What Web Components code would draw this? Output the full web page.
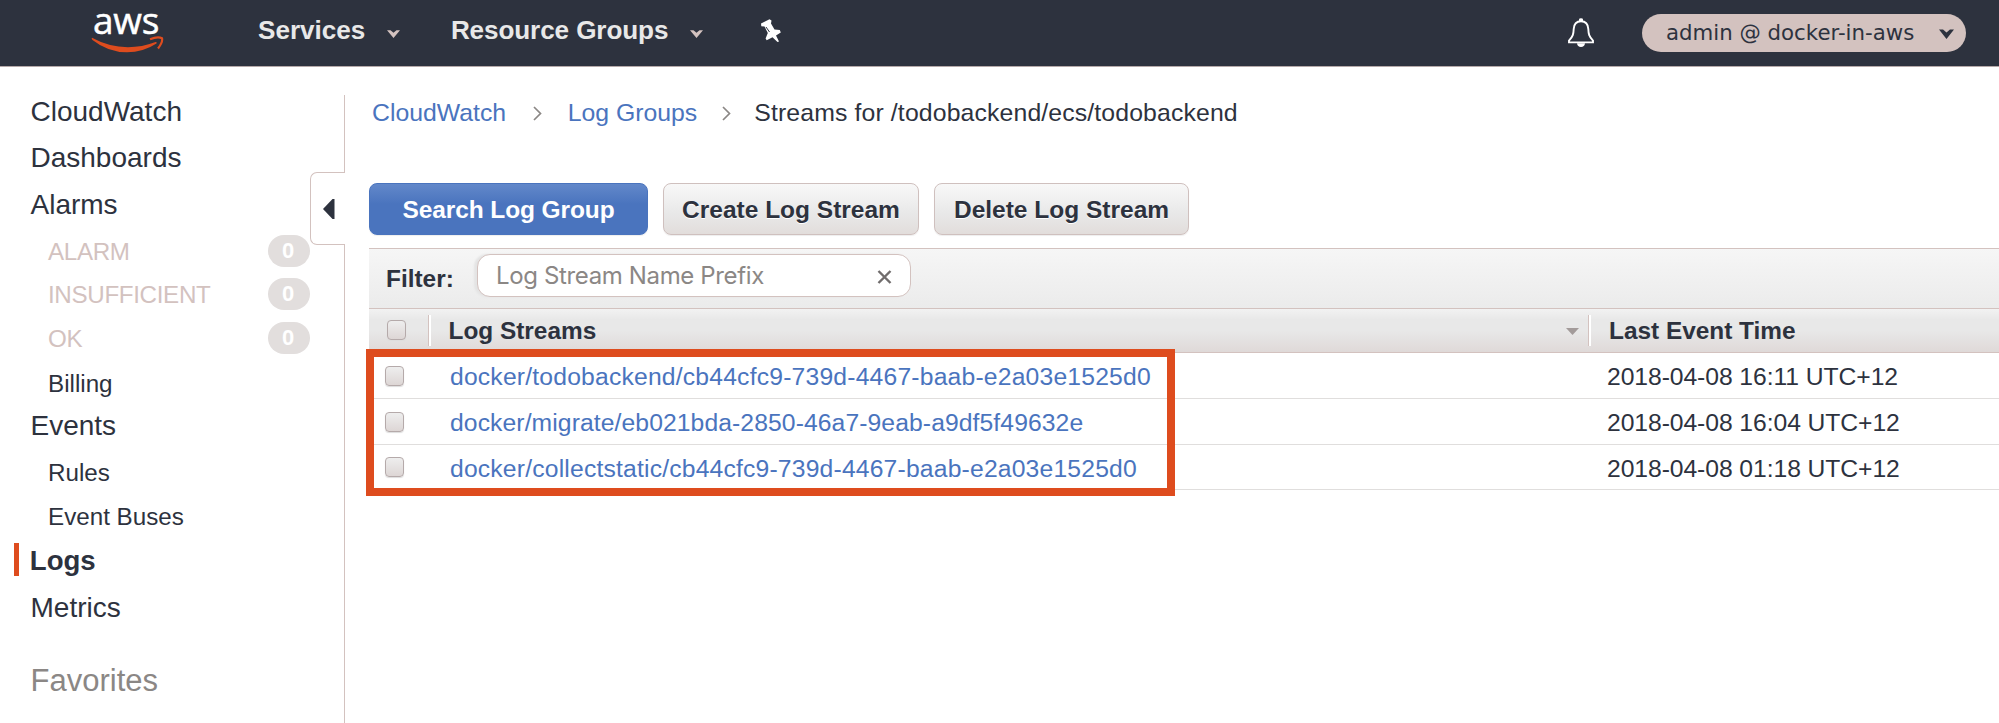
<!DOCTYPE html>
<html lang="en">
<head>
<meta charset="utf-8">
<title>CloudWatch Management Console</title>
<style>
html,body{margin:0;height:100%;overflow:hidden;background:#fff}
body{font-family:"Liberation Sans",Arial,sans-serif;color:#2d323e}
</style>
</head>
<body>
<cw-app></cw-app>
<script>
const define = (name, html) => {
  const t = document.createElement('template');
  t.innerHTML = html;
  customElements.define(name, class extends HTMLElement {
    constructor() {
      super();
      this.attachShadow({ mode: 'open' }).append(t.content.cloneNode(true));
    }
  });
};

define('aws-logo', `<style>
:host{display:flex;flex-direction:column;width:74px;height:66px}
span{font:500 37px/40px "Open Sans",sans-serif;-webkit-text-stroke:.5px #fff;color:#fff;height:36px;padding-left:2px;letter-spacing:-.2px;white-space:nowrap}
svg{display:block;flex:none}</style>
<span>aws</span>
<svg width="74" height="18" viewBox="0 0 74 18"><path d="M1 1.800Q0 2.800 1.500 4Q17 16.300 36 16.300Q52 16.300 65.500 7.500Q66.500 5.800 64.500 6Q51 11.200 37 11.200Q18 11.200 1 1.800Z" fill="#de4c1e"/><path d="M59 3.2Q67 0 71 2.300Q72 6 67 12.500" fill="none" stroke="#de4c1e" stroke-width="2.2"/></svg>`);

define('nav-caret', `<style>:host{display:block;width:13px;height:8px;color:#d3c2bf}:host([dark]){width:15px;height:10px;color:#2d323e}svg{display:block;width:100%;height:100%}</style>
<svg viewBox="0 0 13 8" preserveAspectRatio="none"><path d="M0 0.300H3.500L6.500 2.800L9.500 0.300H13L6.500 8Z" fill="currentColor"/></svg>`);

define('nav-menu', `<style>:host{display:flex;align-items:center;height:61px;font-weight:700;font-size:26.1px;color:#e8e8e8;white-space:nowrap}
nav-caret{margin:6px 0 0 22px}</style><slot></slot><nav-caret></nav-caret>`);

define('top-bar', `<style>
:host{display:flex;height:67px;background:#2d323e;border-bottom:1px solid #b5a9a9;box-sizing:border-box;padding-left:91px}
.s{margin-left:93px}.r{margin-left:50.500px;letter-spacing:-.1px}
.pin{margin:18px 0 0 57px}.bell{margin:17px 0 0 auto}
.acct{display:flex;align-items:center;box-sizing:border-box;width:324px;height:38px;margin:14px 33px 0 47px;border-radius:19px;background:#d3c2bf;padding:0 12px 0 24px;justify-content:space-between;font:21.300px "DejaVu Sans",sans-serif;white-space:nowrap}
.acct span{margin-top:-2px}
.acct nav-caret{margin-top:2px}
svg{flex:none;display:block}</style>
<aws-logo></aws-logo>
<nav-menu class="s">Services</nav-menu>
<nav-menu class="r">Resource Groups</nav-menu>
<svg class="pin" width="22" height="26" viewBox="0 0 22 26"><path d="M1 5.500L9.500 1.200L11.500 2.500L11 5.500L14.500 11.500L19.800 12L20.800 14.500L16 17.500L19 23.500L17.500 24L12.500 19.300L6.700 22.300L5.600 20.500L7.800 15L4.500 8.500L1.300 8.200Z" fill="#fff"/><path d="M6 9L9.500 14" stroke="#2d323e" stroke-width="1" fill="none"/></svg>
<svg class="bell" width="28" height="31" viewBox="0 0 28 31"><path d="M2 25.400V23.600C6 19.500 6.500 17 6.700 12C7 6.500 10 4.200 14 4.200S21 6.500 21.300 12C21.500 17 22 19.500 26 23.600V25.400Z" fill="none" stroke="#fff" stroke-width="1.900"/><path d="M10 26.200H18Q17.500 30 14 30T10 26.200ZM12 4V2.500Q12 1.300 14 1.300T16 2.500V4Z" fill="#fff"/></svg>
<div class="acct"><span>admin @ docker-in-aws</span><nav-caret dark></nav-caret></div>`);

define('side-item', `<style>
:host{display:flex;align-items:center;justify-content:space-between;height:30px;line-height:30px;font-size:28px;padding-left:30.500px;white-space:nowrap}
span{padding-top:2px}
:host([sub]){font-size:24.2px;padding-left:48px}
:host([muted]){color:#d3c2bf;letter-spacing:-.35px}
:host([active]){font-weight:700;font-size:27.600px;border-left:5px solid #de4c1e;margin-left:14px;padding-left:10.800px;height:33px}
:host([title-row]){font-size:31px;color:#8b8785}</style><span><slot></slot></span><slot name="count"></slot>`);

define('count-badge', `<style>:host{display:flex;align-items:center;justify-content:center;width:42px;height:32px;border-radius:16px;background:#e2dedd;color:#fff;font:700 22px/32px "Liberation Sans",sans-serif;box-sizing:border-box;padding-right:2px}</style><slot></slot>`);

define('side-nav', `<style>
:host{display:block;width:310px;flex:none;margin-top:-1px}
side-item{margin-top:var(--gap)}</style>
<side-item style="--gap:30px">CloudWatch</side-item>
<side-item style="--gap:16px">Dashboards</side-item>
<side-item style="--gap:17px">Alarms</side-item>
<side-item sub muted style="--gap:17px">ALARM<count-badge slot="count">0</count-badge></side-item>
<side-item sub muted style="--gap:13px">INSUFFICIENT<count-badge slot="count">0</count-badge></side-item>
<side-item sub muted style="--gap:14px">OK<count-badge slot="count">0</count-badge></side-item>
<side-item sub style="--gap:15px">Billing</side-item>
<side-item style="--gap:12px">Events</side-item>
<side-item sub style="--gap:17px">Rules</side-item>
<side-item sub style="--gap:14px">Event Buses</side-item>
<side-item active style="--gap:12px">Logs</side-item>
<side-item style="--gap:16px">Metrics</side-item>
<side-item title-row style="--gap:43px">Favorites</side-item>`);

define('side-divider', `<style>
:host{display:flex;flex-direction:column;width:36px;flex:none;padding-top:28px;box-sizing:border-box}
.a,.c{border-right:1px solid #d3c2bf;width:34px}.a{height:77px}.c{flex:1}
.b{height:73px;width:35px;box-sizing:border-box;border:1px solid #d3c2bf;border-right:0;border-radius:7px 0 0 7px;display:flex;align-items:center}
svg{margin-left:10.500px}</style>
<div class="a"></div><div class="b"><svg width="13" height="22" viewBox="0 0 13 22"><path d="M12.500 1V21H10.500L1 11L10.500 1Z" fill="#2d323e"/></svg></div><div class="c"></div>`);

define('crumb-trail', `<style>
:host{display:flex;align-items:center;height:30px;margin:31px 0 0 3px;font-size:24.8px;white-space:nowrap}
a{color:#4a74be}span{letter-spacing:.13px}svg{flex:none}</style>
<a>CloudWatch</a><svg style="margin:0 26px 0 26.500px" width="9" height="15" viewBox="0 0 9 15"><path d="M1 1L7.500 7.500L1 14" fill="none" stroke="#8b8785" stroke-width="1.700"/></svg>
<a>Log Groups</a><svg style="margin:0 23px 0 25px" width="9" height="15" viewBox="0 0 9 15"><path d="M1 1L7.500 7.500L1 14" fill="none" stroke="#8b8785" stroke-width="1.700"/></svg>
<span>Streams for /todobackend/ecs/todobackend</span>`);

define('cw-button', `<style>
:host{display:flex;align-items:center;justify-content:center;box-sizing:border-box;width:var(--w);height:52px;padding-top:2px;border-radius:8px;border:1px solid #cfc0be;background:linear-gradient(#f8f8f8,#e8e8e8 60%,#e2dddb);font-weight:700;font-size:24.500px;white-space:nowrap;box-shadow:0 1px 1px #eee;text-shadow:0 1px 0 #fff}
:host([primary]){background:linear-gradient(#6288ca,#4a74be 40%);border-color:#4a74be;color:#fff;text-shadow:none;letter-spacing:-.1px}</style><slot></slot>`);

define('filter-bar', `<style>
:host{display:flex;height:59px;border-top:1px solid #d3c2bf;border-bottom:1px solid #d3c2bf;background:linear-gradient(#f6f6f6,#ebebeb);padding-left:17px}
b{font-size:24.400px;line-height:30px;margin-top:15px;width:91px}
.in{display:flex;align-items:center;justify-content:space-between;box-sizing:border-box;width:434px;height:43px;margin-top:5px;border:1.500px solid #d3c2bf;border-radius:13px;background:#fff;padding:0 18px;color:#8b8785;font:24px/28px Inter,sans-serif;white-space:nowrap;box-shadow:-3px 0 2px #e4e4e4}
.in span{letter-spacing:-.36px}
svg{flex:none;margin-top:3px}</style>
<b>Filter:</b><div class="in"><span>Log Stream Name Prefix</span><svg width="15" height="14" viewBox="0 0 15 14"><path d="M1.500 1L13.500 13M13.500 1L1.500 13" stroke="#706c6c" stroke-width="2.400"/></svg></div>`);

define('check-box', `<style>:host{display:block;box-sizing:border-box;width:19px;height:20px;border:1.500px solid #b5aaaa;border-radius:4px;background:linear-gradient(#eee,#ddd6d5);box-shadow:0 1px 1px #ddd}</style>`);

define('log-row', `<style>
:host{display:grid;grid-template-columns:81px 1157px 1fr;align-items:center;height:45.800px;box-sizing:border-box;padding-top:4px;border-bottom:1.500px solid #e0dedd;font-size:24.700px;white-space:nowrap}
check-box{margin:0 0 3px 16px}a{color:#4a74be;letter-spacing:var(--track)}span{letter-spacing:-.07px}</style>
<check-box></check-box><a><slot></slot></a><span><slot name="time"></slot></span>`);

define('table-head', `<style>
:host{display:flex;height:44px;box-sizing:border-box;border-bottom:1.500px solid #d3c2bf;background:linear-gradient(#f2f2f2,#e8e8e8 25%,#e8e8e8 50%,#dfd9d8);font-weight:700;font-size:24.400px;line-height:43px;white-space:nowrap}
check-box{margin:11px 22px 0 18px;flex:none}
i{flex:none;width:1px;height:31px;margin-top:6px;background:#d3c2bf;border-right:2px solid #fff}
svg{flex:none;margin:19px 9px 0 auto}
.n{display:flex;width:1139.500px;padding-left:17.500px}.t{margin-left:18px}</style>
<check-box></check-box><i></i><div class="n"><span>Log Streams</span><svg width="13" height="7" viewBox="0 0 13 7"><path d="M0 0H13L6.500 7Z" fill="#a39b9a"/></svg></div><i></i><span class="t">Last Event Time</span>`);

define('highlight-box', `<style>:host{position:absolute;left:-3px;top:-4px;width:809px;height:147px;box-sizing:border-box;border:8px solid #de4c1e;pointer-events:none}</style>`);

define('log-table', `<style>:host{display:block}.rows{position:relative}</style>
<filter-bar></filter-bar><table-head></table-head>
<div class="rows">
<log-row style="--track:.19px">docker/todobackend/cb44cfc9-739d-4467-baab-e2a03e1525d0<span slot="time">2018-04-08 16:11 UTC+12</span></log-row>
<log-row style="--track:.09px">docker/migrate/eb021bda-2850-46a7-9eab-a9df5f49632e<span slot="time">2018-04-08 16:04 UTC+12</span></log-row>
<log-row style="--track:.18px">docker/collectstatic/cb44cfc9-739d-4467-baab-e2a03e1525d0<span slot="time">2018-04-08 01:18 UTC+12</span></log-row>
<highlight-box></highlight-box></div>`);

define('cw-app', `<style>
:host{display:flex;flex-direction:column;width:100%;height:100vh;overflow:hidden}
.body{display:flex;flex:1;min-height:0}
main{flex:1;margin-left:23px;min-width:0}
.actions{display:flex;margin:55px 0 13px}
.actions cw-button+cw-button{margin-left:15px}</style>
<top-bar></top-bar>
<div class="body"><side-nav></side-nav><side-divider></side-divider>
<main><crumb-trail></crumb-trail>
<div class="actions"><cw-button primary style="--w:279px">Search Log Group</cw-button><cw-button style="--w:256px">Create Log Stream</cw-button><cw-button style="--w:255px">Delete Log Stream</cw-button></div>
<log-table></log-table></main></div>`);
</script>
</body>
</html>
